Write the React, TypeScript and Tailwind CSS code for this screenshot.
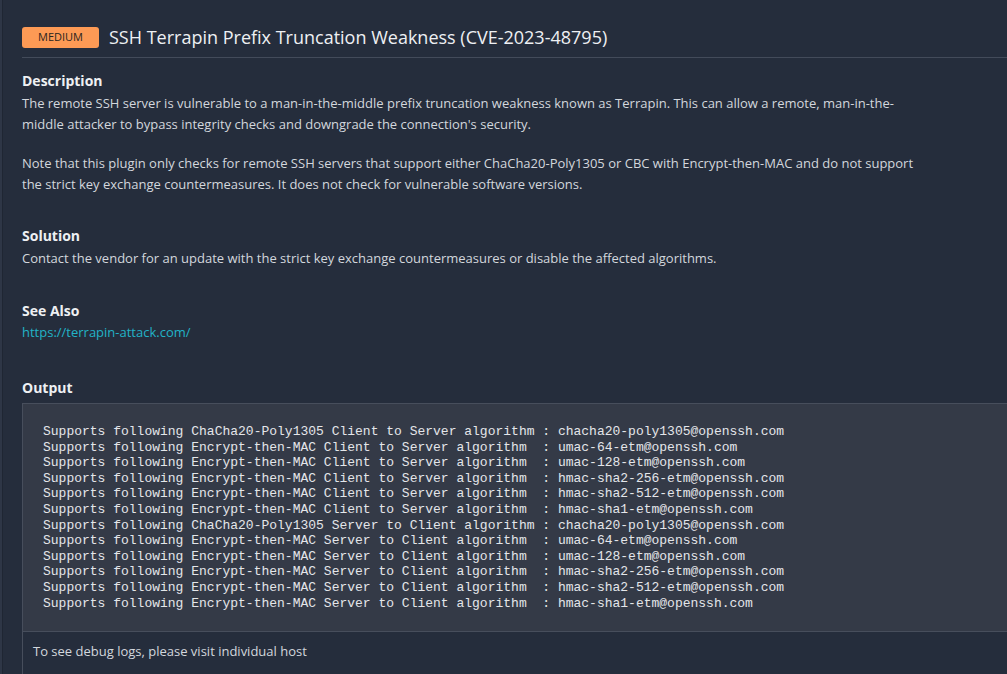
import React from "react";

const outputLines = [
  "Supports following ChaCha20-Poly1305 Client to Server algorithm : chacha20-poly1305@openssh.com",
  "Supports following Encrypt-then-MAC Client to Server algorithm  : umac-64-etm@openssh.com",
  "Supports following Encrypt-then-MAC Client to Server algorithm  : umac-128-etm@openssh.com",
  "Supports following Encrypt-then-MAC Client to Server algorithm  : hmac-sha2-256-etm@openssh.com",
  "Supports following Encrypt-then-MAC Client to Server algorithm  : hmac-sha2-512-etm@openssh.com",
  "Supports following Encrypt-then-MAC Client to Server algorithm  : hmac-sha1-etm@openssh.com",
  "Supports following ChaCha20-Poly1305 Server to Client algorithm : chacha20-poly1305@openssh.com",
  "Supports following Encrypt-then-MAC Server to Client algorithm  : umac-64-etm@openssh.com",
  "Supports following Encrypt-then-MAC Server to Client algorithm  : umac-128-etm@openssh.com",
  "Supports following Encrypt-then-MAC Server to Client algorithm  : hmac-sha2-256-etm@openssh.com",
  "Supports following Encrypt-then-MAC Server to Client algorithm  : hmac-sha2-512-etm@openssh.com",
  "Supports following Encrypt-then-MAC Server to Client algorithm  : hmac-sha1-etm@openssh.com",
];

function SectionTitle({ children }: { children: React.ReactNode }) {
  return <h3 className="text-[14px] leading-[20px] font-bold text-[#eef0f3]">{children}</h3>;
}

export default function App() {
  return (
    <div
      className="h-[674px] w-full overflow-hidden bg-[#252d3c] flex"
      style={{ fontFamily: '"Open Sans", "Noto Sans", sans-serif' }}
    >
      {/* left rail */}
      <div className="w-[2px] shrink-0 bg-[#2e3646]" />
      <div className="w-px shrink-0 bg-[#1f2633]" />

      <div className="flex-1 min-w-0 pl-[19px]">
        <div className="w-[calc(100%+20px)]">
          {/* Header */}
          <div className="flex items-center gap-[10px] pt-[23px] pb-[6px] border-b border-[#434b5a]">
            <span className="h-[21px] w-[77px] rounded-[3px] bg-[#fd9a55] text-[#2a2520] text-[11px] flex items-center justify-center">
              MEDIUM
            </span>
            <h1 className="text-[18px] leading-[28px] text-[#eef0f3]">
              SSH Terrapin Prefix Truncation Weakness (CVE-2023-48795)
            </h1>
          </div>

          {/* Description */}
          <div className="mt-[13px]">
            <SectionTitle>Description</SectionTitle>
            <div className="mt-[2px] max-w-[905px] text-[13px] leading-[21px] text-[#d3d7dd]">
              <p>
                The remote SSH server is vulnerable to a man-in-the-middle prefix truncation weakness known as Terrapin. This can allow a remote, man-in-the-middle attacker to bypass integrity checks and downgrade the connection's security.
              </p>
              <p className="mt-[18px]">
                Note that this plugin only checks for remote SSH servers that support either ChaCha20-Poly1305 or CBC with Encrypt-then-MAC and do not support the strict key exchange countermeasures. It does not check for vulnerable software versions.
              </p>
            </div>
          </div>

          {/* Solution */}
          <div className="mt-[31px]">
            <SectionTitle>Solution</SectionTitle>
            <p className="mt-[2px] text-[13px] leading-[21px] text-[#d3d7dd]">
              Contact the vendor for an update with the strict key exchange countermeasures or disable the affected algorithms.
            </p>
          </div>

          {/* See Also */}
          <div className="mt-[32px]">
            <SectionTitle>See Also</SectionTitle>
            <a className="block mt-[1px] text-[13px] leading-[21px] text-[#22b3c7]">https://terrapin-attack.com/</a>
          </div>

          {/* Output */}
          <div className="mt-[35px]">
            <SectionTitle>Output</SectionTitle>
            <div className="mt-[5px] border border-[#474e5c] border-r-0">
              <pre
                className="bg-[#343a47] px-[20px] pt-[20px] pb-[20px] text-[13px] leading-[15.6px] text-[#e4e6ea]"
                style={{ fontFamily: '"Liberation Mono", "DejaVu Sans Mono", monospace' }}
              >
                {outputLines.join("\n")}
              </pre>
              <div className="border-t border-[#474e5c] bg-[#252d3c] px-[10px] py-[9px] h-[60px]">
                <p className="text-[13px] leading-[21px] text-[#d3d7dd]">To see debug logs, please visit individual host</p>
              </div>
            </div>
          </div>
        </div>
      </div>
    </div>
  );
}
